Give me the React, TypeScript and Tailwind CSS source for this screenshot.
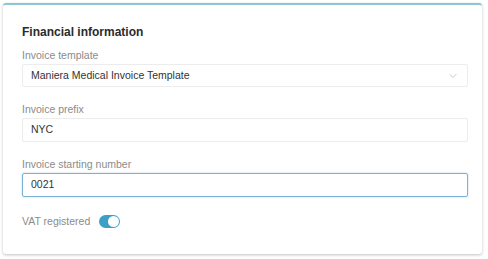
import { ChevronDown } from "lucide-react";

const Label = ({ children }: { children: React.ReactNode }) => (
  <div className="text-[10.5px] leading-[12px] text-[#8b8b8b] mb-[3px]">{children}</div>
);

export default function App() {
  return (
    <div className="w-[488px] h-[259px] bg-white p-[3px] pb-[5px] pr-[6px] font-['Liberation_Sans',Arial,sans-serif]">
      <div className="h-full bg-white rounded-[3px] border-t-2 border-t-[#8fc3d6] shadow-[0_1px_3px_rgba(0,0,0,0.25)] pl-[19px] pr-[14px] pt-[19px]">
        <h2 className="text-[12px] leading-[16px] font-bold text-[#2b2b2b] mb-[9px]">Financial information</h2>

        <Label>Invoice template</Label>
        <div className="h-[23px] border border-[#ececec] rounded-[2px] flex items-center justify-between pl-[8px] pr-[8px]">
          <span className="text-[10.5px] text-[#333]">Maniera Medical Invoice Template</span>
          <ChevronDown className="w-[12px] h-[12px] text-[#b5b5b5]" strokeWidth={1.5} />
        </div>

        <div className="mt-[16px]">
          <Label>Invoice prefix</Label>
          <div className="h-[24px] border border-[#ececec] rounded-[2px] flex items-center pl-[8px]">
            <span className="text-[10.5px] text-[#333]">NYC</span>
          </div>
        </div>

        <div className="mt-[16px]">
          <Label>Invoice starting number</Label>
          <div className="h-[24px] border border-[#79b2d4] rounded-[2px] flex items-center pl-[8px] shadow-[0_0_2px_rgba(121,178,212,0.5)]">
            <span className="text-[10.5px] text-[#333]">0021</span>
          </div>
        </div>

        <div className="mt-[17px] flex items-center gap-[9px]">
          <span className="text-[10.5px] leading-[14px] text-[#8b8b8b]">VAT registered</span>
          <div className="w-[21px] h-[13px] rounded-full bg-[#3d9fc6] relative">
            <div className="absolute right-[1px] top-[1px] w-[11px] h-[11px] rounded-full bg-white" />
          </div>
        </div>
      </div>
    </div>
  );
}
